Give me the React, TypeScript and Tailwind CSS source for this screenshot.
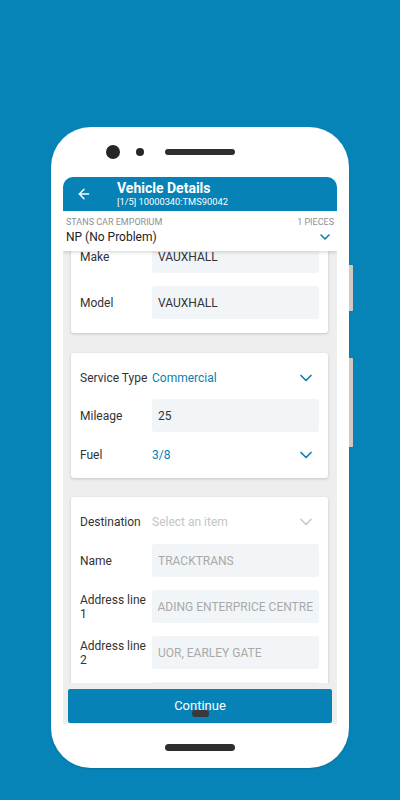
import { ArrowLeft, ChevronDown } from "lucide-react";

const font = { fontFamily: "Roboto, 'Liberation Sans', sans-serif" };

function InputRow({ label, value, muted, clipStart, className }: { label: string; value: string; muted?: boolean; clipStart?: boolean; className?: string }) {
    return (
        <div className={`flex items-center ${className ?? ""}`}>
            <div className="w-[68px] shrink-0 text-[12px] leading-[14px] text-[#333]">{label}</div>
            <div className="ml-[4px] flex h-[33px] min-w-0 flex-1 items-center rounded-[3px] bg-[#f1f5f8] px-[6px]">
                <div className={`flex min-w-0 flex-1 overflow-hidden whitespace-nowrap text-[12px] ${clipStart ? "justify-end" : ""} ${muted ? "text-[#a9a9a9]" : "text-[#333]"}`}>
                    <span className="shrink-0">{value}</span>
                </div>
            </div>
        </div>
    );
}

function SelectRow({ label, value, placeholder, className }: { label: string; value: string; placeholder?: boolean; className?: string }) {
    return (
        <div className={`flex h-[34px] items-center ${className ?? ""}`}>
            <div className="w-[72px] shrink-0 text-[12px] text-[#333]">{label}</div>
            <div className={`flex-1 text-[12px] ${placeholder ? "text-[#c4c4c4]" : "text-[#0a7fb1]"}`}>{value}</div>
            <ChevronDown size={20} strokeWidth={2} className={`mr-[3px] ${placeholder ? "text-[#c8c8c8]" : "text-[#0a7fb1]"}`} />
        </div>
    );
}

export default function App() {
    return (
        <div className="relative flex h-[800px] w-[400px] justify-center overflow-hidden bg-[#0784b7] pt-[127px]" style={font}>
            <div className="relative flex h-[641px] w-[298px] flex-col rounded-[40px] bg-white shadow-[0_1px_2px_rgba(0,0,0,0.15)]">
                {/* side buttons */}
                <div className="absolute left-[298px] top-[138px] h-[46px] w-[4px] rounded-r-[1px] bg-[#d3c9c4]" />
                <div className="absolute left-[298px] top-[231px] h-[89px] w-[4px] rounded-r-[1px] bg-[#d3c9c4]" />

                {/* camera + speaker */}
                <div className="flex h-[50px] items-center pl-[55px]">
                    <div className="h-[14px] w-[14px] rounded-full bg-[#262626]" />
                    <div className="ml-[16px] h-[8px] w-[8px] rounded-full bg-[#262626]" />
                    <div className="ml-[21px] h-[6px] w-[70px] rounded-full bg-[#2e2e2e]" />
                </div>

                {/* screen */}
                <div className="mx-[12px] flex h-[547px] flex-col overflow-hidden rounded-t-[10px] bg-[#eeeeee]">
                    <div className="flex h-[34px] shrink-0 items-center bg-[#0782b6] text-white">
                        <ArrowLeft size={16} strokeWidth={2.2} className="ml-[13px]" />
                        <div className="ml-[25px] flex flex-col">
                            <div className="text-[14px] font-bold leading-[16px]">Vehicle Details</div>
                            <div className="text-[9.3px] leading-[12px]">[1/5] 10000340:TMS90042</div>
                        </div>
                    </div>
                    <div className="relative z-10 h-[40px] shrink-0 bg-white px-[3px] pt-[5px] shadow-[0_2px_3px_rgba(0,0,0,0.12)]">
                        <div className="flex justify-between text-[9px] leading-[12px] text-[#8f8f8f]">
                            <span>STANS CAR EMPORIUM</span>
                            <span>1 PIECES</span>
                        </div>
                        <div className="flex items-center justify-between">
                            <span className="text-[12px] leading-[18px] text-[#222]">NP (No Problem)</span>
                            <ChevronDown size={16} strokeWidth={2.4} className="mr-[1px] text-[#0a7fb1]" />
                        </div>
                    </div>

                    <div className="flex flex-1 flex-col overflow-hidden">
                        <div className="ml-[8px] mt-[-25px] flex w-[257px] flex-col gap-[13px] rounded-[3px] bg-white px-[9px] pb-[14px] pt-[14px] shadow-[0_1px_3px_rgba(0,0,0,0.18)]">
                            <InputRow label="Make" value="VAUXHALL" />
                            <InputRow label="Model" value="VAUXHALL" />
                        </div>

                        <div className="ml-[8px] mt-[20px] flex w-[257px] flex-col rounded-[3px] bg-white px-[9px] pb-[6px] pt-[8px] shadow-[0_1px_3px_rgba(0,0,0,0.18)]">
                            <SelectRow label="Service Type" value="Commercial" />
                            <InputRow label="Mileage" value="25" className="mt-[4px]" />
                            <SelectRow label="Fuel" value="3/8" className="mt-[6px]" />
                        </div>

                        <div className="ml-[8px] mt-[19px] flex w-[257px] shrink-0 flex-col rounded-[3px] bg-white px-[9px] pb-[14px] pt-[8px] shadow-[0_1px_3px_rgba(0,0,0,0.18)]">
                            <SelectRow label="Destination" value="Select an item" placeholder />
                            <div className="mt-[5px] flex flex-col gap-[13px]">
                                <InputRow label="Name" value="TRACKTRANS" muted />
                                <InputRow label="Address line 1" value="READING ENTERPRICE CENTRE" muted clipStart />
                                <InputRow label="Address line 2" value="UOR, EARLEY GATE" muted />
                                <InputRow label="Town" value="READING" muted />
                            </div>
                        </div>
                    </div>

                    <div className="relative shrink-0 bg-[#eeeeee] px-[5px] pb-[1px] pt-[6px]">
                        <div className="flex h-[34px] items-center justify-center rounded-[2px] bg-[#0782b6] text-[13px] text-white">
                            Continue
                        </div>
                        <div className="absolute left-[129px] top-[27px] h-[7px] w-[17px] rounded-[3px] bg-[#3a3a3a]" />
                    </div>
                </div>

                {/* home bar */}
                <div className="mt-[20px] flex justify-center">
                    <div className="h-[7px] w-[70px] rounded-full bg-[#2e2e2e]" />
                </div>
            </div>
        </div>
    );
}
